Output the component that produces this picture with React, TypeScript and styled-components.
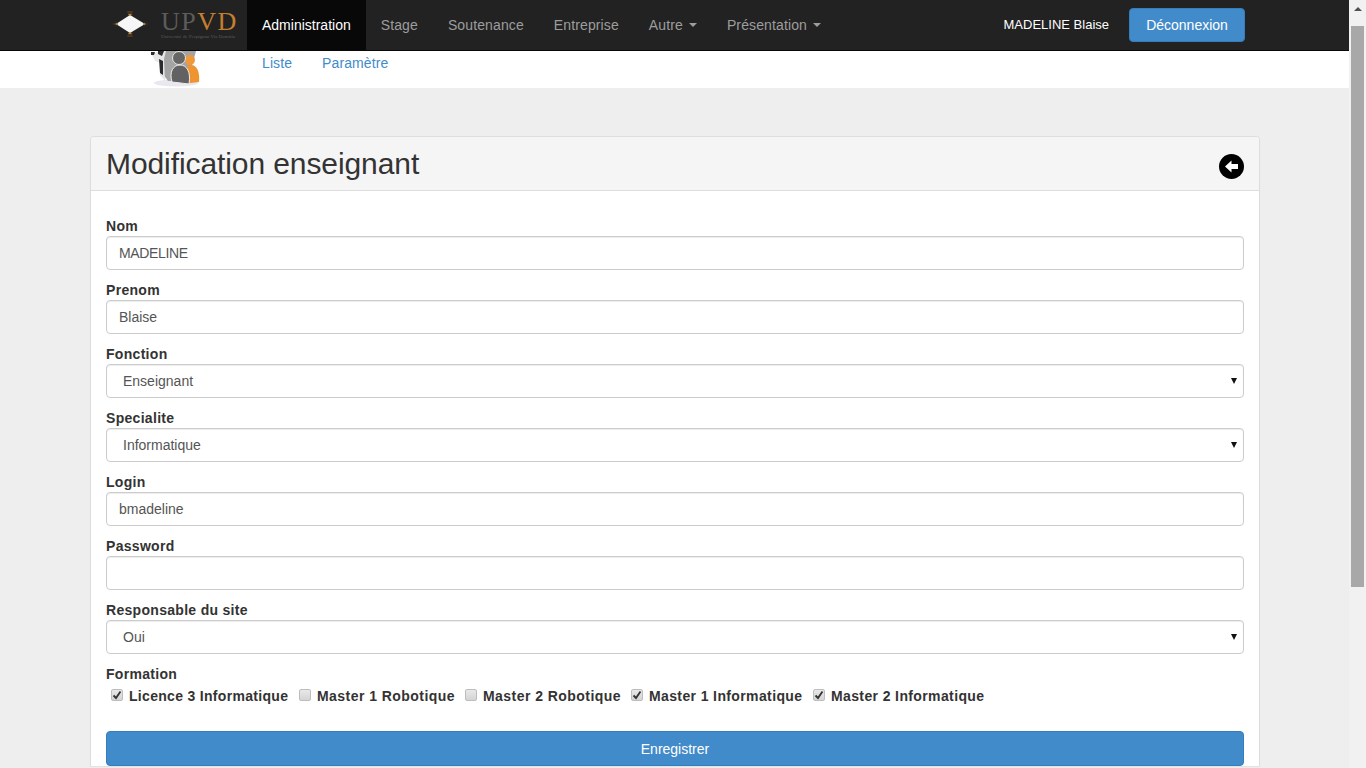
import styled, { createGlobalStyle } from 'styled-components';

const GlobalStyle = createGlobalStyle`
  html, body {
    margin: 0;
    height: 100%;
    overflow: hidden;
  }
  * {
    box-sizing: border-box;
  }
  body {
    font-family: "Liberation Sans", Arial, sans-serif;
    font-size: 14px;
    line-height: 20px;
    color: #333;
    background: #eee;
  }
`;

const Viewport = styled.div`
  display: flex;
  width: 1366px;
  height: 768px;
  overflow: hidden;
`;

const Page = styled.div`
  width: 1349px;
  height: 768px;
  overflow: hidden;
  flex-shrink: 0;
`;

const Scrollbar = styled.div`
  width: 17px;
  background: #f1f1f1;
  display: flex;
  flex-direction: column;
  align-items: center;
  padding-top: 7px;
`;

const ScrollArrow = styled.div`
  width: 0;
  height: 0;
  border-left: 4px solid transparent;
  border-right: 4px solid transparent;
  border-bottom: 4px solid #505050;
  margin-bottom: 15px;
`;

const ScrollThumb = styled.div`
  width: 13px;
  height: 561px;
  background: #a8a8a8;
`;

const Navbar = styled.nav`
  display: flex;
  align-items: stretch;
  height: 51px;
  padding: 0 104px 0 105px;
  background: #222;
  border-bottom: 1px solid #080808;
`;

const Brand = styled.div`
  width: 142px;
  display: flex;
  align-items: center;
  gap: 13px;
  padding-left: 7px;
`;

const BrandText = styled.div`
  display: flex;
  flex-direction: column;
  margin-top: -1px;
`;

const BrandWord = styled.div`
  font-family: "Liberation Serif", serif;
  font-size: 26px;
  line-height: 24px;
  letter-spacing: 1.5px;
  color: #5c5c5c;
  white-space: nowrap;
`;

const BrandAccent = styled.span`
  color: #c67f2e;
`;

const BrandTag = styled.div`
  font-family: "Liberation Serif", serif;
  font-size: 5px;
  line-height: 6px;
  color: #5c5c5c;
  white-space: nowrap;
`;

const NavItem = styled.a<{ $active?: boolean }>`
  display: flex;
  align-items: center;
  gap: 6px;
  padding: 0 15px;
  letter-spacing: ${props => (props.$active ? '0' : '0.12px')};
  color: ${props => (props.$active ? '#fff' : '#9d9d9d')};
  background: ${props => (props.$active ? '#080808' : 'transparent')};
`;

const Caret = styled.span`
  width: 0;
  height: 0;
  border-left: 4px solid transparent;
  border-right: 4px solid transparent;
  border-top: 4px solid #9d9d9d;
`;

const NavRight = styled.div`
  margin-left: auto;
  display: flex;
  align-items: center;
  gap: 20px;
`;

const UserName = styled.span`
  font-size: 13px;
  color: #fff;
`;

const LogoutButton = styled.button`
  width: 116px;
  height: 34px;
  font: inherit;
  color: #fff;
  background: #428bca;
  border: 1px solid #357ebd;
  border-radius: 4px;
`;

const SubNav = styled.div`
  display: flex;
  height: 37px;
  padding-left: 150px;
  background: #fff;
`;

const SubIcon = styled.div`
  width: 112px;
  height: 36px;
`;

const SubLink = styled.a`
  margin-right: 30px;
  letter-spacing: 0.1px;
  color: #428bca;
  line-height: 24px;
`;

const Content = styled.main`
  padding: 48px 89px 0 90px;
`;

const Panel = styled.section`
  background: #fff;
  border: 1px solid #ddd;
  border-bottom: 0;
  border-radius: 4px 4px 0 0;
  box-shadow: 0 1px 1px rgba(0, 0, 0, 0.05);
`;

const PanelHeader = styled.header`
  display: flex;
  align-items: center;
  justify-content: space-between;
  height: 54px;
  padding: 0 15px;
  background: #f5f5f5;
  border-bottom: 1px solid #ddd;
  border-radius: 3px 3px 0 0;
`;

const Title = styled.h2`
  margin: 0;
  font-size: 30px;
  font-weight: 400;
  line-height: 33px;
  letter-spacing: -0.09px;
  color: #333;
`;

const BackLink = styled.a`
  display: flex;
  margin-top: 5px;
`;

const PanelBody = styled.div`
  padding: 25px 15px 0;
  display: flex;
  flex-direction: column;
  gap: 10px;
`;

const Field = styled.div`
  display: flex;
  flex-direction: column;
`;

const Label = styled.label`
  font-weight: 700;
  line-height: 20px;
  letter-spacing: 0.3px;
  color: #333;
`;

const TextInput = styled.input<{ $tight?: boolean }>`
  height: 34px;
  padding: 6px 12px;
  font: inherit;
  letter-spacing: ${props => (props.$tight ? '-0.35px' : '0')};
  color: #555;
  background: #fff;
  border: 1px solid #ccc;
  border-radius: 4px;
  box-shadow: inset 0 1px 1px rgba(0, 0, 0, 0.075);
  outline: none;
`;

const SelectWrap = styled.div`
  position: relative;
`;

const Select = styled.select`
  appearance: none;
  display: block;
  width: 100%;
  height: 34px;
  padding: 6px 12px 6px 16px;
  font: inherit;
  color: #555;
  background: #fff;
  border: 1px solid #ccc;
  border-radius: 4px;
  box-shadow: inset 0 1px 1px rgba(0, 0, 0, 0.075);
  outline: none;
`;

const SelectArrow = styled.span`
  position: absolute;
  right: 7px;
  top: 14px;
  width: 0;
  height: 0;
  border-left: 3.5px solid transparent;
  border-right: 3.5px solid transparent;
  border-top: 6px solid #111;
  pointer-events: none;
`;

const CheckRow = styled.div`
  display: flex;
  align-items: center;
  height: 24px;
  padding-left: 5px;
`;

const CheckLabel = styled.label<{ $width: number; $spacing: number }>`
  flex: 0 0 ${props => props.$width}px;
  display: flex;
  align-items: center;
  gap: 6px;
  font-weight: 700;
  letter-spacing: ${props => props.$spacing}px;
  color: #333;
`;

const CheckBox = styled.span`
  width: 12px;
  height: 12px;
  margin-top: -3px;
  display: flex;
  align-items: center;
  justify-content: center;
  background: linear-gradient(#e8e8e8, #d4d4d4);
  border: 1px solid #bdbdbd;
  border-radius: 2px;
`;

const SaveButton = styled.button`
  height: 35px;
  margin-top: 13px;
  font: inherit;
  color: #fff;
  background: #428bca;
  border: 1px solid #357ebd;
  border-radius: 4px;
`;

const formations = [
  { name: 'Licence 3 Informatique', checked: true, width: 188, spacing: 0.31 },
  { name: 'Master 1 Robotique', checked: false, width: 166, spacing: 0.45 },
  { name: 'Master 2 Robotique', checked: false, width: 166, spacing: 0.45 },
  { name: 'Master 1 Informatique', checked: true, width: 182, spacing: 0.38 },
  { name: 'Master 2 Informatique', checked: true, width: 182, spacing: 0.38 },
];

function BrandMark() {
  return (
    <svg width="36" height="28" viewBox="0 0 36 28">
      <path d="M15 0 H21 L19.5 5 H16.5 Z M15 26 H21 L19.5 21 H16.5 Z" fill="#4a3520" />
      <path d="M0 13 L5 11 V15 Z M36 13 L32 11 V15 Z" fill="#4a3520" />
      <path d="M4 13 L18 4 L33 13 L18 22 Z" fill="#f6f6f6" />
      <path d="M16 3 H20 L18 5 Z M16 23 H20 L18 21 Z M3 13 L6 12 V14 Z M34 13 L31 12 V14 Z" fill="#a9854f" />
    </svg>
  );
}

function TeamIcon() {
  return (
    <svg width="50" height="36" viewBox="0 0 50 36">
      <ellipse cx="26" cy="32" rx="22" ry="3.5" fill="#e9e7f0" />
      <path d="M14 0 H46 L40 22 L32 30 H18 L12 22 Z" fill="#a4a4a4" />
      <path d="M0 2 H6 L8 0 H16 L14 8 L15 30 L10 24 L11 12 L5 10 L3 6 Z" fill="#e6e6e6" />
      <path d="M1 1 H5 L4 4 H1 Z M8 0 H14 L12 5 L8 3 Z M9 8 L13 10 L13 24 L10 22 Z" fill="#2c2c30" />
      <circle cx="40" cy="9" r="5" fill="#ee9a3a" />
      <path d="M33 33 C32 20 35 14 41 14 C47 14 50 21 49 31 Z" fill="#ee9430" />
      <circle cx="29" cy="7" r="6.5" fill="#666" stroke="#e4e4e4" />
      <path d="M22 31 C19 21 23 14 30 14 C37 14 41 21 39 33 Z" fill="#626262" stroke="#efefef" />
    </svg>
  );
}

function BackIcon() {
  return (
    <svg width="25" height="25" viewBox="0 0 25 25">
      <circle cx="12.5" cy="12.5" r="12.5" fill="#000" />
      <path d="M6 12.5 L12.5 6.5 V10 H19 V15 H12.5 V18.5 Z" fill="#fff" />
    </svg>
  );
}

function CheckMark() {
  return (
    <svg width="10" height="10" viewBox="0 0 10 10">
      <path d="M1.5 5.5 L4 8 L8.5 1.5" fill="none" stroke="#333" strokeWidth="1.8" />
    </svg>
  );
}

export default function App() {
  return (
    <Viewport>
      <GlobalStyle />
      <Page>
        <Navbar>
          <Brand>
            <BrandMark />
            <BrandText>
              <BrandWord>
                UP<BrandAccent>VD</BrandAccent>
              </BrandWord>
              <BrandTag>Université de Perpignan Via Domitia</BrandTag>
            </BrandText>
          </Brand>
          <NavItem $active>Administration</NavItem>
          <NavItem>Stage</NavItem>
          <NavItem>Soutenance</NavItem>
          <NavItem>Entreprise</NavItem>
          <NavItem>
            Autre <Caret />
          </NavItem>
          <NavItem>
            Présentation <Caret />
          </NavItem>
          <NavRight>
            <UserName>MADELINE Blaise</UserName>
            <LogoutButton>Déconnexion</LogoutButton>
          </NavRight>
        </Navbar>

        <SubNav>
          <SubIcon>
            <TeamIcon />
          </SubIcon>
          <SubLink>Liste</SubLink>
          <SubLink>Paramètre</SubLink>
        </SubNav>

        <Content>
          <Panel>
            <PanelHeader>
              <Title>Modification enseignant</Title>
              <BackLink>
                <BackIcon />
              </BackLink>
            </PanelHeader>
            <PanelBody>
              <Field>
                <Label>Nom</Label>
                <TextInput $tight defaultValue="MADELINE" />
              </Field>
              <Field>
                <Label>Prenom</Label>
                <TextInput defaultValue="Blaise" />
              </Field>
              <Field>
                <Label>Fonction</Label>
                <SelectWrap>
                  <Select defaultValue="Enseignant">
                    <option>Enseignant</option>
                  </Select>
                  <SelectArrow />
                </SelectWrap>
              </Field>
              <Field>
                <Label>Specialite</Label>
                <SelectWrap>
                  <Select defaultValue="Informatique">
                    <option>Informatique</option>
                  </Select>
                  <SelectArrow />
                </SelectWrap>
              </Field>
              <Field>
                <Label>Login</Label>
                <TextInput defaultValue="bmadeline" />
              </Field>
              <Field>
                <Label>Password</Label>
                <TextInput type="password" />
              </Field>
              <Field>
                <Label>Responsable du site</Label>
                <SelectWrap>
                  <Select defaultValue="Oui">
                    <option>Oui</option>
                  </Select>
                  <SelectArrow />
                </SelectWrap>
              </Field>
              <Field>
                <Label>Formation</Label>
                <CheckRow>
                  {formations.map(formation => (
                    <CheckLabel key={formation.name} $width={formation.width} $spacing={formation.spacing}>
                      <CheckBox>{formation.checked && <CheckMark />}</CheckBox>
                      {formation.name}
                    </CheckLabel>
                  ))}
                </CheckRow>
              </Field>
              <SaveButton>Enregistrer</SaveButton>
            </PanelBody>
          </Panel>
        </Content>
      </Page>
      <Scrollbar>
        <ScrollArrow />
        <ScrollThumb />
      </Scrollbar>
    </Viewport>
  );
}
